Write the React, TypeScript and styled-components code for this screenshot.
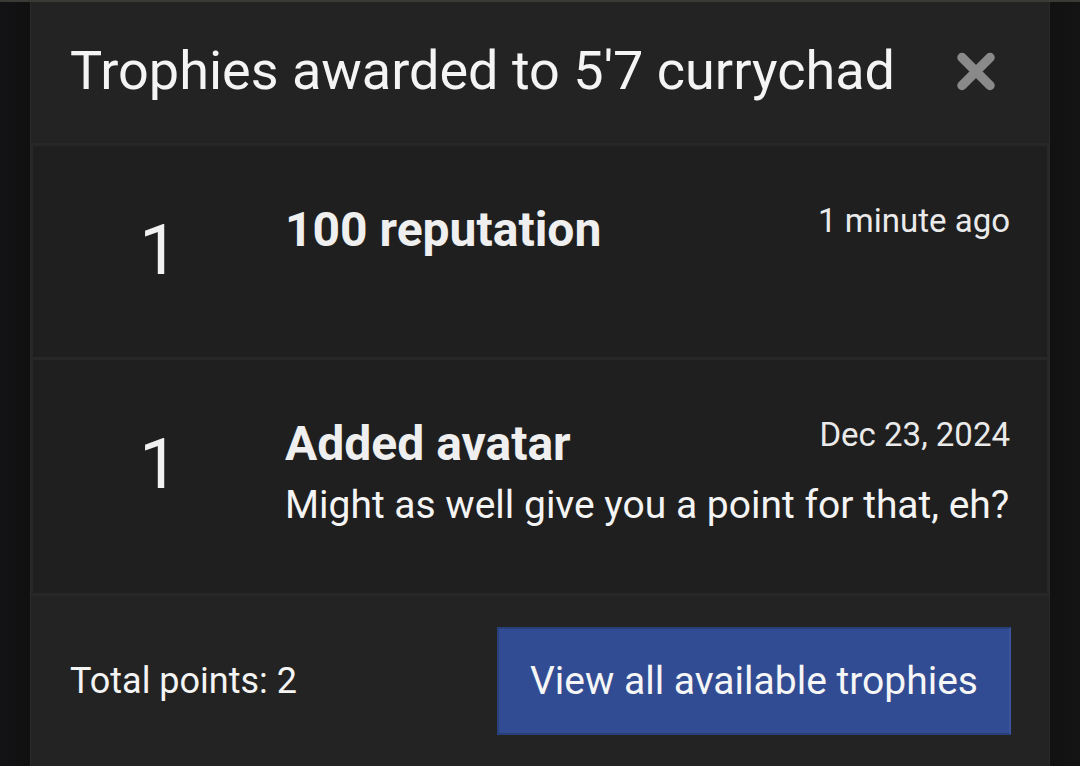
import styled, { createGlobalStyle } from 'styled-components';

const GlobalStyle = createGlobalStyle`
  html, body {
    margin: 0;
    padding: 0;
    background: #121212;
  }
  body {
    font-family: Roboto, "Noto Sans", "Liberation Sans", sans-serif;
    color: #f1f1f1;
    overflow: hidden;
  }
`;

const Backdrop = styled.div`
  height: 766px;
  padding: 0 30px;
  box-sizing: border-box;
  background: linear-gradient(90deg, #131316 0%, #101010 3%, #111 97%, #141414 100%);
  border-top: 2px solid #3a3a36;
`;

const Panel = styled.div`
  background: #232323;
  border-left: 1px solid #2a2a2a;
  border-right: 1px solid #2a2a2a;
  height: 100%;
  box-sizing: border-box;
`;

const Header = styled.div`
  display: flex;
  align-items: center;
  justify-content: space-between;
  height: 141px;
  padding: 0 54px 2px 39px;
  box-sizing: border-box;
`;

const Title = styled.h1`
  margin: 0;
  font-size: 54px;
  font-weight: 400;
  line-height: 1.2;
  color: #f4f4f4;
`;

const CloseButton = styled.button`
  display: flex;
  padding: 0;
  border: none;
  background: none;
  cursor: pointer;
`;

const List = styled.div`
  display: flex;
  flex-direction: column;
  gap: 3px;
  padding: 3px 2px;
  background: #272727;
`;

const Row = styled.div`
  display: grid;
  grid-template-columns: 252px 1fr;
  background: #1f1f1f;
  padding: 55px 37px 65px 0;
`;

const Points = styled.div`
  font-size: 70px;
  line-height: 1.2;
  text-align: center;
  margin-top: 7px;
  color: #f1f1f1;
`;

const Info = styled.div`
  display: flex;
  flex-direction: column;
`;

const TopLine = styled.div`
  display: flex;
  justify-content: space-between;
  align-items: flex-start;
`;

const Name = styled.div`
  font-size: 48px;
  font-weight: 700;
  line-height: 1.2;
  color: #efefef;
`;

const When = styled.div`
  font-size: 33px;
  line-height: 1.2;
  color: #eaeaea;
`;

const Description = styled.div`
  font-size: 39px;
  line-height: 1.2;
  margin-top: 9px;
  color: #f4f4f4;
`;

const Footer = styled.div`
  display: flex;
  align-items: center;
  justify-content: space-between;
  padding: 31px 38px 32px 39px;
`;

const Total = styled.div`
  font-size: 36px;
  line-height: 1.2;
  color: #f4f4f4;
`;

const ViewButton = styled.button`
  font-family: inherit;
  font-size: 39px;
  line-height: 1.2;
  color: #f6f6f6;
  background: #324c93;
  border: 2px solid #27407a;
  border-right-color: #3a559e;
  height: 108px;
  width: 514px;
  padding: 0;
  text-align: center;
  cursor: pointer;
`;

type Trophy = {
  points: number;
  name: string;
  when: string;
  description?: string;
};

const trophies: Trophy[] = [
  { points: 1, name: '100 reputation', when: '1 minute ago' },
  {
    points: 1,
    name: 'Added avatar',
    when: 'Dec 23, 2024',
    description: 'Might as well give you a point for that, eh?',
  },
];

const CloseIcon = () => (
  <svg width="38" height="39" viewBox="0 0 38 39">
    <path d="M5 5.5 L33 33.5 M33 5.5 L5 33.5" stroke="#8a8a8a" strokeWidth="9.5" strokeLinecap="round" />
  </svg>
);

export default function App() {
  const total = trophies.reduce((sum, t) => sum + t.points, 0);
  return (
    <>
      <GlobalStyle />
      <Backdrop>
        <Panel>
          <Header>
            <Title>Trophies awarded to 5'7 currychad</Title>
            <CloseButton aria-label="Close">
              <CloseIcon />
            </CloseButton>
          </Header>
          <List>
            {trophies.map((t) => (
              <Row key={t.name}>
                <Points>{t.points}</Points>
                <Info>
                  <TopLine>
                    <Name>{t.name}</Name>
                    <When>{t.when}</When>
                  </TopLine>
                  {t.description && <Description>{t.description}</Description>}
                </Info>
              </Row>
            ))}
          </List>
          <Footer>
            <Total>Total points: {total}</Total>
            <ViewButton>View all available trophies</ViewButton>
          </Footer>
        </Panel>
      </Backdrop>
    </>
  );
}
